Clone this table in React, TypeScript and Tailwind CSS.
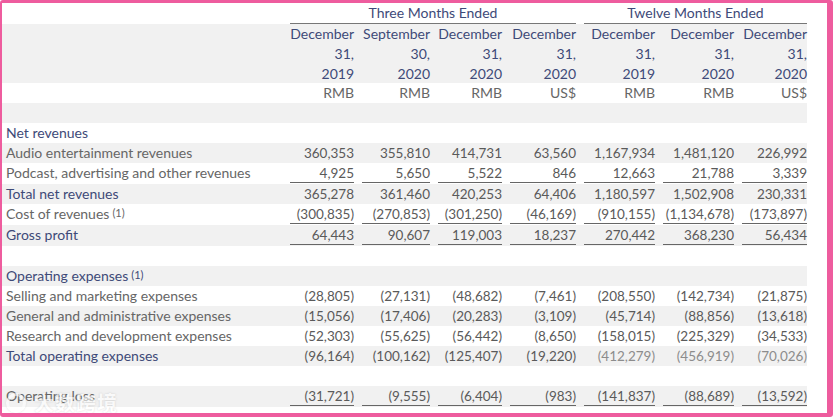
import React from 'react';

type Row = {
    label: string;
    sup?: boolean;
    head?: boolean;
    values?: string[];
    line?: boolean;
    faded?: boolean;
};

const widths = ['w-[72px]', 'w-[76px]', 'w-[72px]', 'w-[74px]', 'w-[79px]', 'w-[79px]', 'w-[73px]'];

const rows: Row[] = [
    { label: 'Net revenues', head: true },
    { label: 'Audio entertainment revenues', values: ['360,353', '355,810', '414,731', '63,560', '1,167,934', '1,481,120', '226,992'] },
    { label: 'Podcast, advertising and other revenues', values: ['4,925', '5,650', '5,522', '846', '12,663', '21,788', '3,339'], line: true },
    { label: 'Total net revenues', head: true, values: ['365,278', '361,460', '420,253', '64,406', '1,180,597', '1,502,908', '230,331'] },
    { label: 'Cost of revenues', sup: true, values: ['(300,835)', '(270,853)', '(301,250)', '(46,169)', '(910,155)', '(1,134,678)', '(173,897)'], line: true },
    { label: 'Gross profit', head: true, values: ['64,443', '90,607', '119,003', '18,237', '270,442', '368,230', '56,434'], line: true },
    { label: '' },
    { label: 'Operating expenses', head: true, sup: true },
    { label: 'Selling and marketing expenses', values: ['(28,805)', '(27,131)', '(48,682)', '(7,461)', '(208,550)', '(142,734)', '(21,875)'] },
    { label: 'General and administrative expenses', values: ['(15,056)', '(17,406)', '(20,283)', '(3,109)', '(45,714)', '(88,856)', '(13,618)'] },
    { label: 'Research and development expenses', values: ['(52,303)', '(55,625)', '(56,442)', '(8,650)', '(158,015)', '(225,329)', '(34,533)'] },
    { label: 'Total operating expenses', head: true, values: ['(96,164)', '(100,162)', '(125,407)', '(19,220)', '(412,279)', '(456,919)', '(70,026)'], faded: true },
    { label: '' },
    { label: 'Operating loss', values: ['(31,721)', '(9,555)', '(6,404)', '(983)', '(141,837)', '(88,689)', '(13,592)'], line: true },
];

const dates = [
    ['December', '31,', '2019', 'RMB'],
    ['September', '30,', '2020', 'RMB'],
    ['December', '31,', '2020', 'RMB'],
    ['December', '31,', '2020', 'US$'],
    ['December', '31,', '2019', 'RMB'],
    ['December', '31,', '2020', 'RMB'],
    ['December', '31,', '2020', 'US$'],
];

const Sup = () => <sup className="ml-[3px] text-[11px] relative -top-[2px]">(1)</sup>;

export default function App() {
    return (
        <div
            className="relative w-[833px] h-[417px] bg-white border-[#ee5c9e] border-t-[3px] border-l-[2px] border-r-[6px] border-b-[4px] rounded-[3px] overflow-hidden"
            style={{ fontFamily: 'Lato, "Noto Sans CJK SC", sans-serif' }}
        >
            <div className="w-[805px] text-[14px] leading-[20px] text-[#666666]">
                {/* 기간 헤더 */}
                <div className="flex h-[21px] text-[#3e4a78]">
                    <div className="w-[280px]" />
                    <div className="w-[294px] pl-2">
                        <div className="text-center border-b border-[#777]">Three Months Ended</div>
                    </div>
                    <div className="w-[231px] pl-2">
                        <div className="text-center border-b border-[#777]">Twelve Months Ended</div>
                    </div>
                </div>
                {/* 날짜 헤더 */}
                <div className="flex bg-[#f1f1f1] text-[#3e4a78] h-[59px]">
                    <div className="w-[280px]" />
                    {dates.map((d, i) => (
                        <div key={i} className={`${widths[i]} pl-1 text-right whitespace-nowrap`}>
                            <div>{d[0]}</div>
                            <div>{d[1]}</div>
                            <div>{d[2]}</div>
                        </div>
                    ))}
                </div>
                <div className="flex h-[20px]">
                    <div className="w-[280px]" />
                    {dates.map((d, i) => (
                        <div key={i} className={`${widths[i]} pl-2 text-right`}>{d[3]}</div>
                    ))}
                </div>
                <div className="h-[20px] bg-[#f1f1f1]" />
                {rows.map((r, idx) => (
                    <div key={idx} className={`flex ${idx % 2 === 1 ? 'bg-[#f1f1f1]' : ''} ${r.line ? 'h-[21px]' : 'h-[20px]'}`}>
                        <div className={`w-[280px] pl-[4px] whitespace-nowrap ${r.head ? 'text-[#3e4a78]' : ''}`}>
                            {r.label}
                            {r.sup && <Sup />}
                        </div>
                        {r.values &&
                            r.values.map((v, i) => (
                                <div key={i} className={`${widths[i]} pl-2`}>
                                    <div
                                        className={`text-right text-[13.5px] h-[20px] whitespace-nowrap ${r.line ? 'border-b border-[#666]' : ''} ${r.faded && i >= 4 ? 'text-[#8c8c8c]' : 'text-[#5a5a5a]'}`}
                                    >
                                        {v}
                                    </div>
                                </div>
                            ))}
                    </div>
                ))}
            </div>
            {/* 워터마크 */}
            <div className="absolute left-[4px] top-[385px] flex items-center gap-[8px] opacity-60 pointer-events-none">
                <div className="w-[20px] h-[20px] rounded-full border-[3px] border-white shadow-[0_0_2px_rgba(0,0,0,0.2)]" />
                <span
                    className="text-[20px] font-bold text-white tracking-[1px]"
                    style={{ textShadow: '0 0 2px rgba(0,0,0,0.25)' }}
                >
                    大数跨境
                </span>
            </div>
        </div>
    );
}
